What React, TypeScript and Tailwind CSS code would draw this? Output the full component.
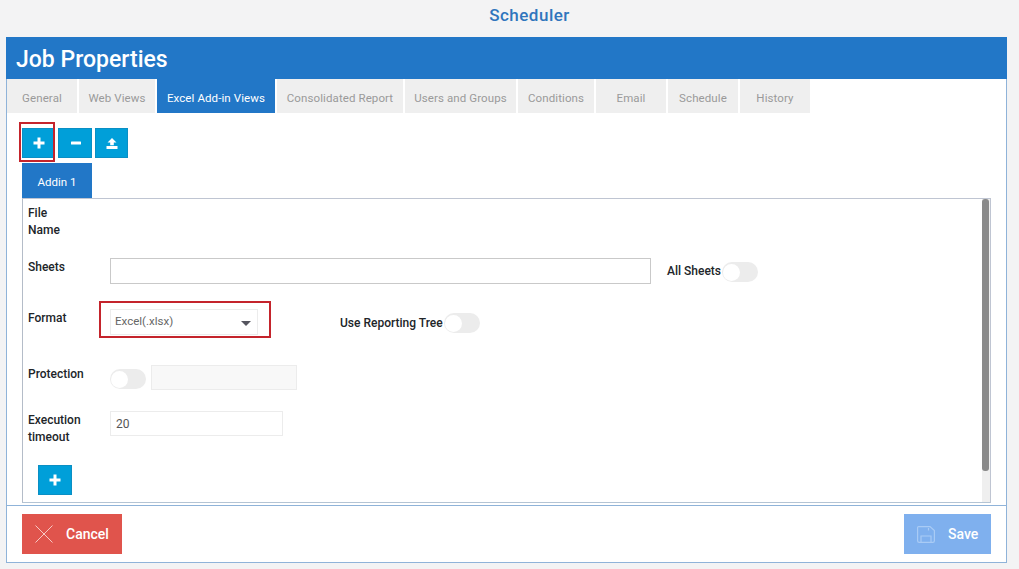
const FONT = "font-['Roboto',sans-serif]";

const tabs = [
  { label: "General", w: "w-[70px]" },
  { label: "Web Views", w: "w-[76px]" },
  { label: "Excel Add-in Views", w: "w-[118px]", active: true },
  { label: "Consolidated Report", w: "w-[126px]" },
  { label: "Users and Groups", w: "w-[111px]" },
  { label: "Conditions", w: "w-[76px]" },
  { label: "Email", w: "w-[70px]" },
  { label: "Schedule", w: "w-[70px]" },
  { label: "History", w: "w-[70px]" },
];

function PlusIcon() {
  return (
    <svg width="12" height="12" viewBox="0 0 12 12" fill="#fff">
      <path d="M4.5 0.5h3v4h4v3h-4v4h-3v-4h-4v-3h4z" />
    </svg>
  );
}

function MinusIcon() {
  return (
    <svg width="12" height="12" viewBox="0 0 12 12" fill="#fff">
      <rect x="1" y="4.5" width="10" height="3" rx="0.5" />
    </svg>
  );
}

function UploadIcon() {
  return (
    <svg width="12" height="11" viewBox="0 0 12 11" fill="#fff">
      <path d="M6 0L10.5 4.4H7.8V7.2H4.2V4.4H1.5z" />
      <rect x="0.5" y="8" width="11" height="3" />
    </svg>
  );
}

function ActionButton({ w, children }: { w: string; children: React.ReactNode }) {
  return (
    <button className={`${w} h-[30px] flex items-center justify-center bg-[#009fd9] border border-[#0a8fc4]`}>
      {children}
    </button>
  );
}

function Toggle() {
  return (
    <div className="w-9 h-5 rounded-full bg-[#ececec] flex items-center pl-px">
      <div className="w-[17px] h-[17px] rounded-full bg-white" />
    </div>
  );
}

function Label({ children, w = "w-[82px]", nudge = false }: { children: React.ReactNode; w?: string; nudge?: boolean }) {
  return (
    <div className={`${w} ${nudge ? "pt-px" : ""} shrink-0 text-[12px] leading-[17px] font-medium text-[#212529]`}>
      {children}
    </div>
  );
}

export default function App() {
  return (
    <div className={`${FONT} w-[1019px] h-[569px] overflow-hidden bg-[#f3f3f4] flex flex-col`}>
      <div className="h-[37px] shrink-0 pl-10 flex items-center justify-center pb-[5px] text-[17px] font-medium tracking-[0.5px] text-[#2f75bd]">
        Scheduler
      </div>

      <div className="mx-[6px] w-[1001px] h-[526px] flex flex-col bg-white border border-[#8fb3d9] border-t-0">
        <div className="h-[42px] shrink-0 -mx-px bg-[#2277c7] pl-[10px] pt-1 flex items-center text-[23px] font-medium text-white">
          Job Properties
        </div>

        <div className="flex gap-[2px] h-[34px] shrink-0">
          {tabs.map((t) => (
            <div
              key={t.label}
              className={`${t.w} flex items-center justify-center pt-[6px] text-[11.5px] tracking-[0.1px] ${
                t.active ? "bg-[#2277c7] text-white" : "bg-[#efefef] text-[#9a9a9a]"
              }`}
            >
              {t.label}
            </div>
          ))}
        </div>

        <div className="pl-[15px] pt-[15px]">
          <div className="flex items-center">
            <div className="relative">
              <ActionButton w="w-[32px]">
                <span className="ml-px flex">
                  <PlusIcon />
                </span>
              </ActionButton>
              <div className="absolute left-[-3px] top-[-6px] w-[36px] h-[40px] border-2 border-[#c4242c]" />
            </div>
            <div className="ml-1">
              <ActionButton w="w-[34px]">
                <span className="ml-px flex">
                  <MinusIcon />
                </span>
              </ActionButton>
            </div>
            <div className="ml-[3px]">
              <ActionButton w="w-[33px]">
                <UploadIcon />
              </ActionButton>
            </div>
          </div>

          <div className="mt-[5px] w-[70px] h-[35px] pt-1 bg-[#2277c7] text-white text-[11.5px] flex items-center justify-center">
            Addin 1
          </div>

          <div className="relative w-[969px] h-[305px] border border-[#bfc5d2] border-b-[#b4c4d4] border-l-[#b4bcc8] pl-[5px] pt-[5px]">
            <div className="flex">
              <Label nudge>
                File
                <br />
                Name
              </Label>
            </div>

            <div className="flex mt-[19px]">
              <Label nudge>Sheets</Label>
              <div className="w-[541px] h-[26px] border border-[#c9c9c9] bg-white" />
              <div className="ml-4 flex items-center h-[26px]">
                <Label w="w-auto">All Sheets</Label>
                <div className="ml-px mt-[2px]">
                  <Toggle />
                </div>
              </div>
            </div>

            <div className="flex mt-[25px]">
              <Label nudge>Format</Label>
              <div className="relative w-[148px] h-[26px] border border-[#ececec] bg-white flex items-center pl-1 text-[11.5px] text-[#666]">
                Excel(.xlsx)
                <div className="ml-auto mr-[6px] mt-[3px] w-0 h-0 border-x-[5px] border-x-transparent border-t-[5px] border-t-[#55555f]" />
                <div className="absolute left-[-12px] top-[-9px] w-[172px] h-[37px] border-2 border-[#c4242c]" />
              </div>
              <div className="ml-[82px] flex items-center h-[26px] mt-px">
                <Label w="w-auto">Use Reporting Tree</Label>
                <div className="ml-px">
                  <Toggle />
                </div>
              </div>
            </div>

            <div className="flex mt-[29px]">
              <Label nudge>Protection</Label>
              <div className="mt-1">
                <Toggle />
              </div>
              <div className="ml-[5px] w-[146px] h-[25px] border border-[#ececec] bg-[#f8f8f8]" />
            </div>

            <div className="flex mt-[21px] h-[34px]">
              <Label nudge>
                Execution
                <br />
                timeout
              </Label>
              <div className="w-[173px] h-[25px] border border-[#ececec] bg-white flex items-center pl-[5px] text-[12px] text-[#555]">
                20
              </div>
            </div>

            <div className="mt-[20px] ml-[10px]">
              <ActionButton w="w-[34px]">
                <PlusIcon />
              </ActionButton>
            </div>

            <div className="absolute right-0 top-0 bottom-0 w-[8px] bg-[#efefef]">
              <div className="w-[7px] h-[272px] rounded-t-[3px] rounded-b-[3px] bg-[#8a8a8a]" />
            </div>
          </div>
        </div>

        <div className="mt-[2px] border-t border-[#8fb3d9] flex-1 flex items-start justify-between pl-[15px] pr-[15px] pt-[8px]">
          <button className="w-[100px] h-10 bg-[#e0544c] flex items-center pl-[13px] text-white text-[14px] font-medium">
            <svg width="18" height="18" viewBox="0 0 18 18" stroke="#f6c9c5" strokeWidth="1" fill="none">
              <path d="M0.5 0.5L17.5 17.5M17.5 0.5L0.5 17.5" />
            </svg>
            <span className="ml-[13px]">Cancel</span>
          </button>
          <button className="w-[87px] h-10 bg-[#7fb0ee] flex items-center pl-[13px] text-white text-[14px] font-medium">
            <svg width="18" height="17" viewBox="0 0 18 17" stroke="#a9cbf5" strokeWidth="1.2" fill="none">
              <path d="M1.5 0.6H13L17.4 4.6V14.8Q17.4 16.4 15.8 16.4H2.2Q0.6 16.4 0.6 14.8V1.5Q0.6 0.6 1.5 0.6Z" />
              <path d="M4 16V10H14V16" />
              <path d="M11.5 2V4.5" />
            </svg>
            <span className="ml-[13px]">Save</span>
          </button>
        </div>
      </div>
    </div>
  );
}
